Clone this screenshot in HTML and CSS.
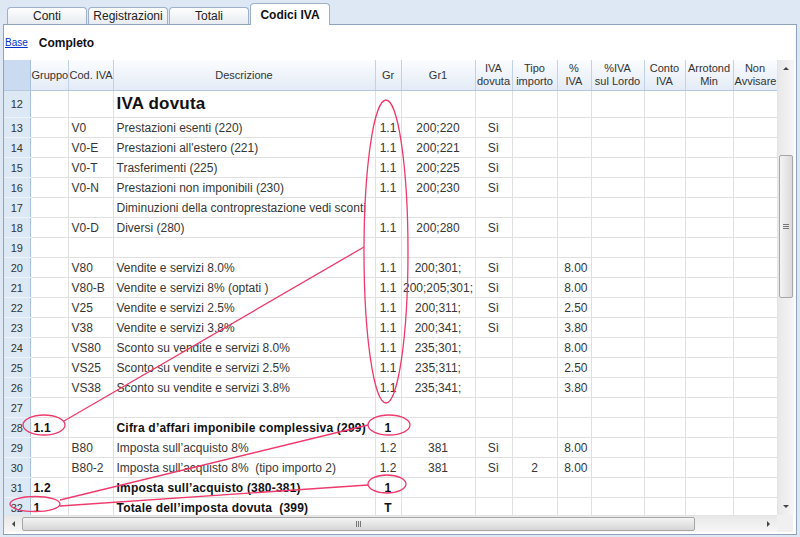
FILE: index.html
```html
<!DOCTYPE html>
<html lang="it">
<head>
    <meta charset="UTF-8">
    <meta name="viewport" content="width=device-width, initial-scale=1.0">
    <title>Codici IVA</title>
    <link rel="stylesheet" href="styles.css">
</head>
<body>
    <div class="tabs">
        <div class="tab">Conti</div>
        <div class="tab">Registrazioni</div>
        <div class="tab">Totali</div>
        <div class="tab active">Codici IVA</div>
    </div>

    <div class="panel">
        <div class="views">
            <a href="#">Base</a>
            <span class="current">Completo</span>
        </div>

        <div class="grid-area">
            <div class="grid-clip">
                <table class="grid">
                    <colgroup>
                        <col style="width:26px">
                        <col style="width:38px">
                        <col style="width:45px">
                        <col style="width:262px">
                        <col style="width:26px">
                        <col style="width:74px">
                        <col style="width:37px">
                        <col style="width:45px">
                        <col style="width:34px">
                        <col style="width:53px">
                        <col style="width:41px">
                        <col style="width:48px">
                        <col style="width:44px">
                    </colgroup>
                    <thead>
                        <tr>
                            <th class="corner"></th>
                            <th>Gruppo</th>
                            <th>Cod. IVA</th>
                            <th>Descrizione</th>
                            <th>Gr</th>
                            <th>Gr1</th>
                            <th>IVA<br>dovuta</th>
                            <th>Tipo<br>importo</th>
                            <th>%<br>IVA</th>
                            <th>%IVA<br>sul Lordo</th>
                            <th>Conto<br>IVA</th>
                            <th>Arrotond<br>Min</th>
                            <th>Non<br>Avvisare</th>
                        </tr>
                    </thead>
                    <tbody>
                        <tr class="title-row">
                            <td class="num">12</td><td></td><td></td><td class="title">IVA dovuta</td>
                            <td></td><td></td><td></td><td></td><td></td><td></td><td></td><td></td><td></td>
                        </tr>
                        <tr>
                            <td class="num">13</td><td></td><td>V0</td><td>Prestazioni esenti (220)</td>
                            <td class="c">1.1</td><td class="c">200;220</td><td class="c">Sì</td><td></td><td></td><td></td><td></td><td></td><td></td>
                        </tr>
                        <tr>
                            <td class="num">14</td><td></td><td>V0-E</td><td>Prestazioni all'estero (221)</td>
                            <td class="c">1.1</td><td class="c">200;221</td><td class="c">Sì</td><td></td><td></td><td></td><td></td><td></td><td></td>
                        </tr>
                        <tr>
                            <td class="num">15</td><td></td><td>V0-T</td><td>Trasferimenti (225)</td>
                            <td class="c">1.1</td><td class="c">200;225</td><td class="c">Sì</td><td></td><td></td><td></td><td></td><td></td><td></td>
                        </tr>
                        <tr>
                            <td class="num">16</td><td></td><td>V0-N</td><td>Prestazioni non imponibili (230)</td>
                            <td class="c">1.1</td><td class="c">200;230</td><td class="c">Sì</td><td></td><td></td><td></td><td></td><td></td><td></td>
                        </tr>
                        <tr>
                            <td class="num">17</td><td></td><td></td><td>Diminuzioni della controprestazione vedi sconti</td>
                            <td></td><td></td><td></td><td></td><td></td><td></td><td></td><td></td><td></td>
                        </tr>
                        <tr>
                            <td class="num">18</td><td></td><td>V0-D</td><td>Diversi (280)</td>
                            <td class="c">1.1</td><td class="c">200;280</td><td class="c">Sì</td><td></td><td></td><td></td><td></td><td></td><td></td>
                        </tr>
                        <tr>
                            <td class="num">19</td><td></td><td></td><td></td>
                            <td></td><td></td><td></td><td></td><td></td><td></td><td></td><td></td><td></td>
                        </tr>
                        <tr>
                            <td class="num">20</td><td></td><td>V80</td><td>Vendite e servizi 8.0%</td>
                            <td class="c">1.1</td><td class="c">200;301;</td><td class="c">Sì</td><td></td><td class="r">8.00</td><td></td><td></td><td></td><td></td>
                        </tr>
                        <tr>
                            <td class="num">21</td><td></td><td>V80-B</td><td>Vendite e servizi 8% (optati )</td>
                            <td class="c">1.1</td><td class="c">200;205;301;</td><td class="c">Sì</td><td></td><td class="r">8.00</td><td></td><td></td><td></td><td></td>
                        </tr>
                        <tr>
                            <td class="num">22</td><td></td><td>V25</td><td>Vendite e servizi 2.5%</td>
                            <td class="c">1.1</td><td class="c">200;311;</td><td class="c">Sì</td><td></td><td class="r">2.50</td><td></td><td></td><td></td><td></td>
                        </tr>
                        <tr>
                            <td class="num">23</td><td></td><td>V38</td><td>Vendite e servizi 3.8%</td>
                            <td class="c">1.1</td><td class="c">200;341;</td><td class="c">Sì</td><td></td><td class="r">3.80</td><td></td><td></td><td></td><td></td>
                        </tr>
                        <tr>
                            <td class="num">24</td><td></td><td>VS80</td><td>Sconto su vendite e servizi 8.0%</td>
                            <td class="c">1.1</td><td class="c">235;301;</td><td></td><td></td><td class="r">8.00</td><td></td><td></td><td></td><td></td>
                        </tr>
                        <tr>
                            <td class="num">25</td><td></td><td>VS25</td><td>Sconto su vendite e servizi 2.5%</td>
                            <td class="c">1.1</td><td class="c">235;311;</td><td></td><td></td><td class="r">2.50</td><td></td><td></td><td></td><td></td>
                        </tr>
                        <tr>
                            <td class="num">26</td><td></td><td>VS38</td><td>Sconto su vendite e servizi 3.8%</td>
                            <td class="c">1.1</td><td class="c">235;341;</td><td></td><td></td><td class="r">3.80</td><td></td><td></td><td></td><td></td>
                        </tr>
                        <tr>
                            <td class="num">27</td><td></td><td></td><td></td>
                            <td></td><td></td><td></td><td></td><td></td><td></td><td></td><td></td><td></td>
                        </tr>
                        <tr class="total">
                            <td class="num">28</td><td>1.1</td><td></td><td>Cifra d’affari imponibile complessiva (299)</td>
                            <td class="c">1</td><td></td><td></td><td></td><td></td><td></td><td></td><td></td><td></td>
                        </tr>
                        <tr>
                            <td class="num">29</td><td></td><td>B80</td><td>Imposta sull’acquisto 8%</td>
                            <td class="c">1.2</td><td class="c">381</td><td class="c">Sì</td><td></td><td class="r">8.00</td><td></td><td></td><td></td><td></td>
                        </tr>
                        <tr>
                            <td class="num">30</td><td></td><td>B80-2</td><td>Imposta sull’acquisto 8% &nbsp;(tipo importo 2)</td>
                            <td class="c">1.2</td><td class="c">381</td><td class="c">Sì</td><td class="c">2</td><td class="r">8.00</td><td></td><td></td><td></td><td></td>
                        </tr>
                        <tr class="total">
                            <td class="num">31</td><td>1.2</td><td></td><td>Imposta sull’acquisto (380-381)</td>
                            <td class="c">1</td><td></td><td></td><td></td><td></td><td></td><td></td><td></td><td></td>
                        </tr>
                        <tr class="total">
                            <td class="num">32</td><td>1</td><td></td><td>Totale dell’imposta dovuta &nbsp;(399)</td>
                            <td class="c">T</td><td></td><td></td><td></td><td></td><td></td><td></td><td></td><td></td>
                        </tr>
                    </tbody>
                </table>
            </div>

            <div class="vscroll">
                <div class="sb-btn"><span class="arrow up"></span></div>
                <div class="sb-track">
                    <div class="sb-thumb"><span class="grip"></span></div>
                </div>
                <div class="sb-btn"><span class="arrow down"></span></div>
            </div>
        </div>

        <div class="hscroll-row">
            <div class="hscroll">
                <div class="sb-btn"><span class="arrow left"></span></div>
                <div class="sb-track">
                    <div class="sb-thumb"><span class="grip"></span></div>
                </div>
                <div class="sb-btn"><span class="arrow right"></span></div>
            </div>
            <div class="sb-corner"></div>
        </div>
    </div>

    <!-- annotazioni rosse sopra la tabella -->
    <svg class="marks" width="800" height="537" viewBox="0 0 800 537">
        <g fill="none" stroke="#ee3a6c" stroke-width="1.3">
            <ellipse cx="386" cy="251.5" rx="22" ry="151.5"/>
            <line x1="364" y1="247" x2="64" y2="421"/>
            <ellipse cx="44" cy="425" rx="21" ry="10"/>
            <ellipse cx="389" cy="425" rx="21" ry="10"/>
            <ellipse cx="387" cy="484" rx="19" ry="9"/>
            <ellipse cx="35" cy="504" rx="25" ry="7.5"/>
            <line x1="60" y1="500" x2="368" y2="425"/>
            <line x1="60" y1="506" x2="368" y2="485"/>
        </g>
    </svg>
</body>
</html>
```

FILE: styles.css
```css
body {
    margin: 0;
    position: relative;
    width: 800px;
    height: 537px;
    overflow: hidden;
    background-color: #dde8f4;
    font-family: "Liberation Sans", Arial, sans-serif;
    font-size: 12px;
    color: #363636;
}

/* tabs */
.tabs {
    display: flex;
    align-items: flex-end;
    height: 24px;
    padding-left: 7px;
}

.tab {
    width: 78px;
    height: 16px;
    margin-right: 1px;
    border: 1px solid #9db0c8;
    border-bottom: none;
    border-radius: 4px 4px 0 0;
    background: linear-gradient(#fefefe, #e7ebf0);
    text-align: center;
    line-height: 17px;
    font-size: 12px;
    color: #222;
}

.tab.active {
    position: relative;
    z-index: 1;
    height: 21px;
    margin-bottom: -1px;
    background: #fff;
    font-weight: bold;
    line-height: 22px;
    color: #111;
}

/* panel */
.panel {
    width: 792px;
    height: 509px;
    margin-left: 3px;
    border: 1px solid #8ea3bd;
    background-color: #fff;
    display: flex;
    flex-direction: column;
}

.views {
    height: 35px;
    display: flex;
    align-items: center;
    padding-left: 1px;
    gap: 11px;
}

.views a {
    color: #0033cc;
    font-size: 10px;
}

.views .current {
    font-weight: bold;
    color: #111;
}

.grid-area {
    display: flex;
    height: 455px;
}

.grid-clip {
    width: 773px;
    height: 455px;
    overflow: hidden;
}

/* grid */
.grid {
    table-layout: fixed;
    border-collapse: collapse;
    width: 773px;
}

.grid th {
    height: 30px;
    padding: 0 1px;
    font-weight: normal;
    font-size: 11px;
    line-height: 13px;
    color: #333;
    background: linear-gradient(#fbfcfe, #e3ebf6);
    border-right: 1px solid #c1d2e7;
    border-bottom: 1px solid #b4c8e0;
    white-space: nowrap;
    overflow: hidden;
    text-align: center;
}

.grid th.corner {
    background: #c9daf1;
    border-right: 1px solid #a9c1de;
}

.grid tbody tr {
    height: 20px;
}

.grid td {
    padding: 0 3px;
    line-height: 14px;
    white-space: nowrap;
    overflow: hidden;
    border-right: 1px solid #e0e0e0;
    border-bottom: 1px solid #e0e0e0;
}

.grid td.num {
    padding: 0;
    text-align: center;
    font-size: 11px;
    color: #333;
    background-color: #dde8f5;
    border-right: 1px solid #a9c1de;
    border-bottom: 1px solid #eef3fa;
}

.grid td.c {
    text-align: center;
    padding: 0 1px;
}

.grid td.r {
    text-align: right;
    padding-right: 3px;
}

.grid tr.title-row {
    height: 27px;
}

.grid td.title {
    font-size: 17px;
    font-weight: bold;
    letter-spacing: 0.2px;
    color: #111;
}

.grid tr.total td {
    font-weight: bold;
    letter-spacing: 0.2px;
    color: #111;
}

.grid tr.total td.num {
    font-weight: normal;
    letter-spacing: 0;
    color: #333;
}

/* scrollbars */
.vscroll {
    width: 16px;
    display: flex;
    flex-direction: column;
    background: linear-gradient(to right, #e8e8e8, #f6f6f6);
    border-left: 1px solid #e4e4e4;
}

.vscroll .sb-btn {
    height: 17px;
}

.vscroll .sb-track {
    flex: 1;
    padding-top: 78px;
}

.vscroll .sb-thumb {
    height: 143px;
    margin: 0 1px;
    background: linear-gradient(to right, #f4f4f4, #dadada);
}

.hscroll-row {
    display: flex;
    height: 17px;
}

.hscroll {
    width: 773px;
    display: flex;
    background: linear-gradient(#e8e8e8, #f6f6f6);
    border-top: 1px solid #e4e4e4;
}

.hscroll .sb-btn {
    width: 18px;
}

.hscroll .sb-track {
    flex: 1;
}

.hscroll .sb-thumb {
    width: 673px;
    height: 14px;
    margin-top: 1px;
    background: linear-gradient(#f4f4f4, #d6d6d6);
}

.sb-corner {
    width: 16px;
    background-color: #f0f0f0;
}

.sb-btn {
    display: flex;
    align-items: center;
    justify-content: center;
}

.sb-thumb {
    display: flex;
    align-items: center;
    justify-content: center;
    border: 1px solid #a6a6a6;
    border-radius: 2px;
    box-sizing: border-box;
}

.vscroll .grip {
    width: 6px;
    height: 5px;
    background: repeating-linear-gradient(#777 0 1px, transparent 1px 2px);
}

.hscroll .grip {
    width: 5px;
    height: 6px;
    background: repeating-linear-gradient(to right, #777 0 1px, transparent 1px 2px);
}

.arrow {
    width: 0;
    height: 0;
}

.arrow.up {
    border-left: 3px solid transparent;
    border-right: 3px solid transparent;
    border-bottom: 3px solid #444;
}

.arrow.down {
    border-left: 3px solid transparent;
    border-right: 3px solid transparent;
    border-top: 3px solid #444;
}

.arrow.left {
    border-top: 3px solid transparent;
    border-bottom: 3px solid transparent;
    border-right: 3px solid #444;
}

.arrow.right {
    border-top: 3px solid transparent;
    border-bottom: 3px solid transparent;
    border-left: 3px solid #444;
}

.marks {
    position: absolute;
    left: 0;
    top: 0;
    pointer-events: none;
}
```
